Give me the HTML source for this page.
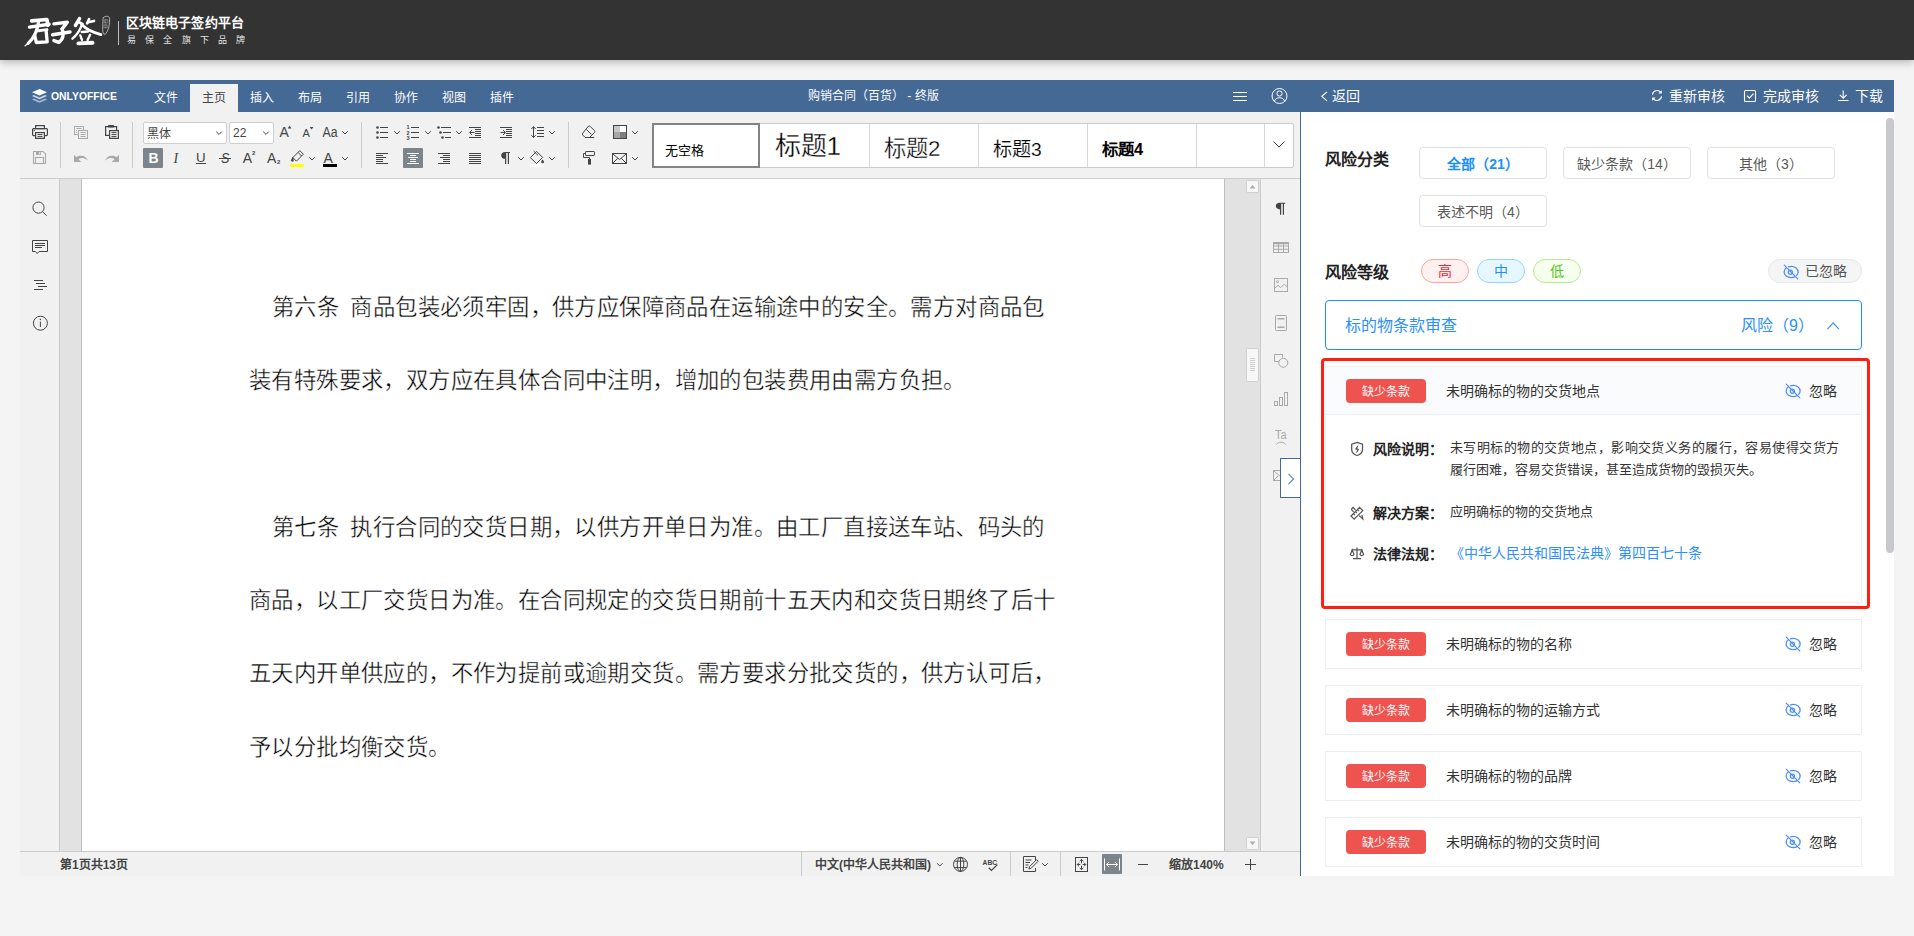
<!DOCTYPE html>
<html lang="zh-CN">
<head>
<meta charset="utf-8">
<title>合同审核</title>
<style>
*{box-sizing:border-box;margin:0;padding:0}
html,body{width:1914px;height:936px;overflow:hidden;background:#f4f4f4;font-family:"Liberation Sans",sans-serif;color:#444}
.abs{position:absolute}
svg{position:absolute;overflow:visible}
/* ---------- top header ---------- */
#hdr{position:absolute;left:0;top:0;width:1914px;height:60px;background:#333;box-shadow:0 2px 8px rgba(0,0,0,.28);z-index:5}
#logo{position:absolute;left:22px;top:11px;width:84px;height:40px;color:#fff;font-family:"Liberation Serif",serif;font-weight:700;font-style:italic;font-size:30px;line-height:40px;letter-spacing:-4.500px;white-space:nowrap}
#seal{position:absolute;left:103px;top:14px;width:9px;height:21px;border:1px solid #c4c4c4;border-radius:4px;transform:rotate(9deg);background:linear-gradient(180deg,#333 0 3px,#9a9a9a 3px 4px,#333 4px 6px,#9a9a9a 6px 7px,#333 7px 10px,#9a9a9a 10px 11px,#333 11px 13px,#9a9a9a 13px 14px,#333 14px)}
#hdiv{position:absolute;left:118px;top:21px;width:1px;height:24px;background:#bdbdbd}
#slog1{position:absolute;left:126px;top:13px;height:20px;line-height:20px;font-size:13px;font-weight:700;color:#fff;white-space:nowrap;letter-spacing:.1px}
#slog2{position:absolute;left:127px;top:33px;height:14px;line-height:14px;font-size:9px;color:#e6e6e6;white-space:nowrap;letter-spacing:9.2px}
/* ---------- editor ---------- */
#ed{position:absolute;left:20px;top:80px;width:1280px;height:796px;background:#f1f1f1}
#edbar{position:absolute;left:0;top:0;width:1280px;height:32px;background:#446995}
.tab{position:absolute;top:4px;width:48px;height:28px;line-height:28px;text-align:center;font-size:12px;color:#fff;white-space:nowrap}
.tab.on{background:#f1f1f1;color:#444}
#tb{position:absolute;left:0;top:32px;width:1280px;height:67px;background:#f1f1f1;border-bottom:1px solid #cbcbcb}
.vsep{position:absolute;width:1px;background:#cbcbcb}
.cmb{position:absolute;height:22px;background:#fff;border:1px solid #cfcfcf;border-radius:2px;font-size:12px;line-height:20px;color:#444;padding-left:3px;white-space:nowrap}
.btnon{position:absolute;width:20px;height:20px;background:#7d858c;border-radius:1px}
#lside{position:absolute;left:0;top:99px;width:40px;height:672px;background:#f1f1f1;border-right:1px solid #cbcbcb}
#docbg{position:absolute;left:40px;top:99px;width:1200px;height:672px;background:#e2e2e2}
#page{position:absolute;left:21px;top:0;width:1144px;height:672px;background:#fff;border-left:1px solid #bbbec2;border-right:1px solid #bbbec2}
.ln{position:absolute;height:30px;line-height:30px;font-size:22.4px;letter-spacing:.4px;color:#000;white-space:nowrap;font-weight:400;-webkit-text-stroke:.4px #fff}
.sp{display:inline-block;width:11.2px}
#rside{position:absolute;left:1240px;top:99px;width:40px;height:672px;background:#f1f1f1;border-left:1px solid #cbcbcb}
#sb{position:absolute;left:0;top:771px;width:1280px;height:25px;background:#f1f1f1;border-top:1px solid #cbcbcb;font-size:12px;font-weight:700;color:#444}
.sbt{position:absolute;top:0;height:24px;line-height:26px;white-space:nowrap}
#gal{position:absolute;left:632px;top:11px;width:642px;height:45px;background:#fff;border:1px solid #cbcbcb;border-radius:2px}
.st{position:absolute;top:0;height:43px;border-right:1px solid #d8d8d8;overflow:hidden}
.st span{position:absolute;white-space:nowrap;color:#000;line-height:34px;height:34px;font-weight:400;-webkit-text-stroke:.300px #fff}
.st.sel{top:-1px;left:-1px !important;height:45px;border:2px solid #848484}
/* ---------- review panel ---------- */
#pn{position:absolute;left:1300px;top:80px;width:594px;height:796px;background:#fff;border-left:1px solid #446995;overflow:hidden}
#pnbar{position:absolute;left:0;top:0;width:594px;height:32px;background:#446995;color:#fff;font-size:14px}
.pbt{position:absolute;top:0;height:32px;line-height:32px;white-space:nowrap;color:#fff;font-size:14px}
.h16{position:absolute;font-size:16px;font-weight:700;color:#222;height:24px;line-height:24px;white-space:nowrap}
.cat{position:absolute;width:128px;height:32px;border:1px solid #dcdfe6;border-radius:4px;background:#fff;text-align:center;line-height:32px;font-size:14px;color:#595959;white-space:nowrap}
.pill{position:absolute;top:179px;width:48px;height:24px;border-radius:12px;border:1px solid;text-align:center;line-height:22px;font-size:14px}
.card{position:absolute;left:24px;width:537px;height:50px;border:1px solid #ebeef5;background:#fff}
.tag{position:absolute;left:20px;top:12px;width:80px;height:24px;border-radius:4px;background:#ef5350;color:#fff;font-size:12px;line-height:26px;text-align:center;white-space:nowrap}
.ttl{position:absolute;left:120px;top:12px;height:24px;line-height:25px;font-size:14px;color:#333;white-space:nowrap}
.ign{position:absolute;left:483px;top:12px;height:24px;line-height:25px;font-size:14px;color:#333;white-space:nowrap}
.lbl{position:absolute;left:47px;height:22px;line-height:22px;font-size:14px;font-weight:700;color:#222;white-space:nowrap}
.val{position:absolute;left:124px;height:22px;line-height:22px;font-size:13px;color:#333;white-space:nowrap}
</style>
</head>
<body>
<!-- ======= top header ======= -->
<div id="hdr">
  <svg id="logosvg" style="left:20px;top:8px" width="104" height="44" viewBox="0 0 1914 810" fill="none" stroke="#fff" stroke-linecap="round" stroke-linejoin="round">
  <!-- 君 -->
  <path d="M215 238 L495 212 L512 318" stroke-width="67"/>
  <path d="M175 352 L535 300" stroke-width="64"/>
  <path d="M300 425 L495 398" stroke-width="55"/>
  <path d="M345 235 C325 400 250 560 150 650" stroke-width="58"/>
  <path d="M150 650 L95 695" stroke-width="26"/>
  <path d="M268 490 L300 635 L500 625 L482 430" stroke-width="61"/>
  <!-- 子 -->
  <path d="M625 292 L870 262 L775 385" stroke-width="64"/>
  <path d="M775 385 C810 470 800 570 715 632 L625 600" stroke-width="64"/>
  <path d="M600 492 L920 442" stroke-width="64"/>
  <!-- 签 -->
  <path d="M1095 195 L1020 322" stroke-width="64"/>
  <path d="M1085 262 L1150 292" stroke-width="49"/>
  <path d="M1272 205 L1235 282" stroke-width="49"/>
  <path d="M1255 262 L1362 238" stroke-width="49"/>
  <path d="M1140 305 C1100 420 1040 500 965 565" stroke-width="44"/>
  <path d="M1135 305 C1230 400 1350 455 1490 490" stroke-width="52"/>
  <path d="M1135 442 L1255 432" stroke-width="44"/>
  <path d="M1110 505 L1140 588" stroke-width="44"/>
  <path d="M1290 492 L1245 590" stroke-width="44"/>
  <path d="M1075 652 L1335 640" stroke-width="72"/>
  <!-- seal -->
  <path d="M1535 175 C1580 140 1640 145 1650 190 C1655 300 1630 420 1570 485 C1535 490 1520 450 1522 400 Z" stroke="#c9c9c9" stroke-width="15"/>
  <path d="M1560 215 h55 v60 h-55 z M1555 310 h50 v55 h-50 z M1575 215 v60 M1580 310 v55" stroke="#adadad" stroke-width="10"/>
</svg>

  <div id="hdiv"></div>
  <div id="slog1">区块链电子签约平台</div>
  <div id="slog2">易保全旗下品牌</div>
</div>

<!-- ======= editor ======= -->
<div id="ed">
  <div id="edbar">
    <svg id="edsvg" style="left:0;top:0;z-index:3" width="1280" height="796" viewBox="20 80 1280 796" fill="none" stroke="none">
<defs>
<path id="chev" d="M-2.8 -1.4 L0 1.4 L2.8 -1.4" stroke="#444" stroke-width="1" fill="none"/>
</defs>
<rect x="403" y="148" width="20" height="20" rx="1" fill="#7d858c"/>
<rect x="143" y="148" width="20" height="20" rx="1" fill="#7d858c"/>
<!-- ONLYOFFICE logo -->
<g fill="#fff">
<path d="M39.5 89 L47 92.3 L39.5 95.6 L32 92.3 Z"/>
<path d="M33.8 95.1 L32 95.9 L39.5 99.2 L47 95.9 L45.2 95.1 L39.5 97.6 Z" opacity=".75"/>
<path d="M33.8 98.6 L32 99.4 L39.5 102.7 L47 99.4 L45.2 98.6 L39.5 101.1 Z" opacity=".55"/>
</g>
<text x="51" y="100.3" font-family="Liberation Sans,sans-serif" font-weight="700" font-size="11px" fill="#fff" textLength="66" lengthAdjust="spacingAndGlyphs">ONLYOFFICE</text>
<!-- title bar right icons -->
<g stroke="#fff" stroke-width="1" shape-rendering="crispEdges"><path d="M1233 92.5h14M1233 96.5h14M1233 100.5h14"/></g>
<g stroke="#fff" stroke-width="1"><circle cx="1279.5" cy="96" r="7.5"/><circle cx="1279.5" cy="93.5" r="2.6"/><path d="M1274.2 101.3c1.2-2.6 3-3.6 5.3-3.6s4.1 1 5.3 3.6"/></g>

<!-- ===== toolbar row 1/2, group 1 ===== -->
<!-- print -->
<g stroke="#444" stroke-width="1.2" fill="none">
<rect x="35.6" y="125.6" width="8.8" height="3"/>
<rect x="32.6" y="128.6" width="14.8" height="7" rx="1"/>
<rect x="35.6" y="132.6" width="8.8" height="5.8" fill="#f1f1f1"/>
<path d="M37.5 134.6h5M37.5 136.6h5" stroke-width="1"/>
</g>
<rect x="33.8" y="129.8" width="1.2" height="1.2" fill="#444"/>
<!-- save (disabled) -->
<g stroke="#a9a9a9" stroke-width="1.1" fill="none">
<path d="M33.5 151.5h9.6l2.4 2.4v9.6h-12z"/>
<rect x="35.5" y="157.5" width="8" height="6"/>
</g>
<rect x="36" y="152" width="5" height="3" fill="#a9a9a9"/><rect x="39" y="152.3" width="1.2" height="2" fill="#f1f1f1"/>
<!-- copy (disabled) -->
<g stroke="#a9a9a9" stroke-width="1" fill="#f1f1f1">
<rect x="74.5" y="126.5" width="9" height="8"/>
<path d="M76.5 128.5h5M76 130.5h1M76 132.5h1" fill="none"/>
<rect x="78.5" y="130.5" width="9" height="8"/>
<path d="M80.5 132.5h5M80.5 134.5h5M80.5 136.5h5" fill="none"/>
</g>
<!-- paste -->
<g stroke="#444" stroke-width="1.2" fill="none">
<path d="M109.5 135.4h-3.9v-8.8h11v4"/>
<rect x="109.6" y="130.6" width="8.8" height="7.8" fill="#f1f1f1"/>
<path d="M111.5 132.6h5M111.5 134.6h5M111.5 136.6h5" stroke-width="1"/>
</g>
<rect x="108" y="125" width="6" height="2.4" rx=".6" fill="#444"/>
<!-- undo / redo (disabled) -->
<path d="M74 154.8v7.2h7.2l-2.7-2.7c2.6-1.9 6.2-1.6 9.6 1.4c-1.8-4.6-7.4-6.6-11.7-3.5z" fill="#a9a9a9"/>
<path d="M119 154.8v7.2h-7.2l2.7-2.7c-2.6-1.9-6.2-1.6-9.6 1.4c1.8-4.6 7.4-6.6 11.7-3.5z" fill="#a9a9a9"/>

<!-- ===== font size controls ===== -->
<g font-family="Liberation Sans,sans-serif" fill="#444">
<text x="279.4" y="136.8" font-size="14px">A</text>
<path d="M287.8 128.4l1.8-2.8l1.8 2.8z"/>
<text x="302.6" y="136.8" font-size="11px">A</text>
<path d="M309.8 127l1.8 2.5l1.8-2.5z"/>
<text x="322.6" y="136.8" font-size="14px" textLength="15" lengthAdjust="spacingAndGlyphs">Aa</text>
<use href="#chev" x="345" y="132.6"/>
<!-- row 2 -->
<text x="148.6" y="163" font-size="14px" font-weight="700" fill="#fff">B</text>
<text x="173.6" y="163" font-size="14px" font-family="Liberation Serif,serif" font-style="italic">I</text>
<text x="196" y="162.4" font-size="13px" textLength="9.6" lengthAdjust="spacingAndGlyphs">U</text>
<rect x="196" y="163" width="10" height="1"/>
<text x="221" y="163" font-size="14px" font-style="italic" textLength="8.4" lengthAdjust="spacingAndGlyphs">S</text>
<rect x="219" y="158" width="12" height="1"/>
<text x="242.8" y="163" font-size="14px">A</text>
<text x="252" y="155" font-size="6px" font-weight="700">2</text>
<text x="267" y="163" font-size="14px">A</text>
<text x="277" y="164.2" font-size="6px" font-weight="700">2</text>
<text x="323.6" y="162.8" font-size="14px">A</text>
</g>
<!-- highlight pen -->
<g stroke="#444" stroke-width="1" fill="none">
<path d="M299.8 150.6l3.6 3.6l-7 7l-3.6-3.6z"/>
<path d="M298 152.4l3.6 3.6"/>
<path d="M292.8 157.6l-1.6 3.2l2 .4z" fill="#444"/>
</g>
<rect x="290" y="164" width="14" height="3" fill="#ffff00"/>
<use href="#chev" x="312" y="158.6"/>
<rect x="323" y="164" width="14" height="3" fill="#000"/>
<use href="#chev" x="345" y="158.6"/>

<!-- ===== paragraph group ===== -->
<g fill="#444">
<circle cx="377.5" cy="127.5" r="1.3"/><circle cx="377.5" cy="132.5" r="1.3"/><circle cx="377.5" cy="137.5" r="1.3"/>
<circle cx="438.5" cy="127.5" r="1.3"/><circle cx="440.5" cy="132.5" r="1.3"/><circle cx="442.5" cy="137.5" r="1.3"/>
</g>
<g stroke="#444" stroke-width="1" shape-rendering="crispEdges">
<path d="M380 127.5h8M380 132.5h8M380 137.5h8"/>
<path d="M411 127.5h8M411 132.5h8M411 137.5h8"/>
<path d="M441 127.5h10M443 132.5h8M445 137.5h6"/>
<!-- dec indent -->
<path d="M469 127.5h12M475 129.5h6M475 131.5h6M475 133.5h6M475 135.5h6M469 137.5h12"/>
<!-- inc indent -->
<path d="M500 127.5h12M506 129.5h6M506 131.5h6M506 133.5h6M506 135.5h6M500 137.5h12"/>
<!-- line spacing -->
<path d="M537 127.5h7M537 130.5h7M537 133.5h7M537 136.5h7"/>
<!-- align left -->
<path d="M376 153.5h12M376 155.5h7M376 157.5h10M376 159.5h7M376 161.5h7M376 163.5h12"/>
<!-- align right -->
<path d="M438 153.5h12M443 155.5h7M440 157.5h10M443 159.5h7M443 161.5h7M438 163.5h12"/>
<!-- justify -->
<path d="M469 153.5h12M469 155.5h12M469 157.5h12M469 159.5h12M469 161.5h12M469 163.5h12"/>
</g>
<g stroke="#fff" stroke-width="1" shape-rendering="crispEdges">
<path d="M407 153.5h12M410 155.5h6M408 157.5h10M410 159.5h6M410 161.5h6M407 163.5h12"/>
</g>
<!-- numbering digits -->
<g font-family="Liberation Sans,sans-serif" font-weight="700" font-size="5.5px" fill="#444">
<text x="406.6" y="129.4">1</text><text x="406.6" y="134.6">2</text><text x="406.6" y="139.6">3</text>
</g>
<g stroke="#444" stroke-width="1" fill="none">
<path d="M474.5 132.5h-4.5M472 130l-2.5 2.5l2.5 2.5"/>
<path d="M500.5 132.5h4.5M503 130l2.500 2.5l-2.5 2.5"/>
<path d="M533.5 126.8v10.6M531.3 129l2.2-2.4l2.2 2.4M531.3 135.200l2.200 2.400l2.200-2.400"/>
</g>
<use href="#chev" x="397" y="132.600"/><use href="#chev" x="428" y="132.600"/><use href="#chev" x="459" y="132.600"/><use href="#chev" x="552" y="132.600"/>
<!-- pilcrow -->
<path d="M505.200 152h4.800v1h-1v11h-1.200v-11h-1.600v11h-1.200v-5.200c-2.400 0-3.800-1.400-3.800-3.400s1.400-3.400 4-3.400z" fill="#444"/>
<use href="#chev" x="521" y="158.600"/>
<!-- bucket -->
<g stroke="#444" stroke-width="1" fill="none">
<path d="M536.600 151.400l6 6l-6.200 6.200l-6-6z"/>
<path d="M533.600 151l4.400 4.400"/>
</g>
<path d="M542.600 159.400c.8 1 1.400 1.800 1.400 2.500a1.400 1.400 0 0 1-2.800 0c0-.7.600-1.500 1.400-2.500z" fill="#444"/>
<rect x="530" y="164" width="14" height="3" fill="#fff"/>
<use href="#chev" x="552" y="158.600"/>

<!-- ===== group 4 ===== -->
<g stroke="#444" stroke-width="1" fill="none">
<!-- eraser -->
<path d="M590.200 126.400l4.200 4.200a1.400 1.400 0 0 1 0 2l-4.900 4.900h-4.300l-2.400-2.400a1.400 1.400 0 0 1 0-2l5.400-6.700a1.400 1.400 0 0 1 2 0z"/>
<path d="M586.400 129.400l5 5M585 137.500h9.200"/>
<!-- roller -->
<rect x="585.500" y="151.500" width="9" height="4" rx=".6"/>
<path d="M585.500 153.500h-2v4h6v2"/>
<!-- mail -->
<rect x="612.500" y="153.500" width="14" height="10"/>
<path d="M612.800 153.800l6.700 5.800l6.700-5.800M612.800 163.200l5-5M626.200 163.200l-5-5"/>
</g>
<rect x="588" y="159" width="3" height="5.600" fill="#444"/>
<!-- color scheme -->
<rect x="614" y="126" width="6" height="6" fill="#c8c8c8"/><rect x="620" y="126" width="6" height="6" fill="#fff"/>
<rect x="614" y="132" width="6" height="6" fill="#a6a6a6"/><rect x="620" y="132" width="6" height="6" fill="#7f7f7f"/>
<rect x="613.500" y="125.500" width="13" height="13" stroke="#444" stroke-width="1" fill="none"/>
<use href="#chev" x="635" y="132.600"/><use href="#chev" x="635" y="158.600"/>
<!-- combobox chevrons -->
<use href="#chev" x="219" y="133"/><use href="#chev" x="266" y="133"/>
<!-- style gallery chevron -->
<path d="M1273.500 141.500l5.500 5.500l5.500-5.500" stroke="#444" stroke-width="1" fill="none"/>
<!-- ===== left sidebar ===== -->
<g stroke="#444" stroke-width="1" fill="none">
<circle cx="38.500" cy="207.600" r="5.600"/><path d="M42.600 211.700l4 4"/>
<path d="M32.500 240.500h15v11h-8.500l-1.800 2l-1.800-2h-2.900z"/>
<path d="M35 243.500h10M35 245.500h10M35 247.500h6.500" shape-rendering="crispEdges"/>
<path d="M34 280.500h9M36 283.500h9M38 286.500h9M34 289.500h9" shape-rendering="crispEdges"/>
<circle cx="40.400" cy="323.200" r="7"/>
<path d="M40.400 321.600v5.400" />
</g>
<circle cx="40.400" cy="319.500" r=".8" fill="#444"/>
<!-- ===== right sidebar ===== -->
<path d="M1279.600 202.800h5.600v1h-1.200v11h-1.200v-11h-1.600v11h-1.200v-5.400c-2.600 0-4.200-1.400-4.200-3.300s1.400-3.300 3.800-3.300z" fill="#444"/>
<g stroke="#a9a9a9" stroke-width="1" fill="none">
<rect x="1273.500" y="242.500" width="15" height="10"/>
<path d="M1273.500 243.500h15" stroke-width="1.400"/>
<path d="M1273.500 246h15M1273.500 249.300h15M1278.500 243v9.500M1283.500 243v9.500"/>
<rect x="1274.500" y="278.500" width="13" height="13"/>
<circle cx="1277.500" cy="281.700" r="1"/>
<path d="M1274.800 288.200l3.200-2.800l2.800 2.200l3.400-3.400l3.200 2.800"/>
<rect x="1275.500" y="315.500" width="11" height="15" rx=".8"/>
<path d="M1277.500 318.700h7M1277.500 327.300h7" stroke-width="1.500"/>
<path d="M1279 361.500h-4.500v-7h8v3"/>
<circle cx="1283.300" cy="362.800" r="4.500"/>
<rect x="1274.500" y="401.500" width="3" height="4"/><rect x="1279.500" y="397.500" width="3" height="8"/><rect x="1284.500" y="392.500" width="3" height="13"/>
<path d="M1276.200 444.600c2.600-3.200 7-3.200 9.600 0"/>
<rect x="1273.500" y="470.500" width="12" height="10"/><path d="M1273.800 470.800l6 5.200M1273.800 480.200l4.600-4.600"/>
</g>
<text x="1275" y="439" font-family="Liberation Sans,sans-serif" font-size="12.500px" fill="#a9a9a9" textLength="11.500" lengthAdjust="spacingAndGlyphs">Ta</text>
<!-- collapse toggle -->
<rect x="1280.500" y="458.500" width="20" height="39" fill="#fff" stroke="#446995" stroke-width="1"/>
<path d="M1288.500 473.800l5 5.200l-5 5.200" stroke="#5a82bd" stroke-width="1.100" fill="none"/>
<!-- ===== vertical scrollbar ===== -->
<g stroke="#cfcfcf" stroke-width="1" fill="#f7f7f7">
<rect x="1246.500" y="180.500" width="12" height="12" rx="1"/>
<rect x="1246.500" y="348.500" width="12" height="33" rx="1"/>
<rect x="1246.500" y="837.500" width="12" height="12" rx="1"/>
</g>
<path d="M1249.500 188.500l3-3.500l3 3.500z" fill="#adadad"/>
<path d="M1249.500 841.500l3 3.500l3-3.500z" fill="#adadad"/>
<path d="M1250 358.500h5M1250 360.500h5M1250 362.500h5M1250 364.500h5M1250 366.500h5M1250 368.500h5M1250 370.500h5" stroke="#cfcfcf" stroke-width="1" shape-rendering="crispEdges"/>
<!-- ===== status bar ===== -->
<g stroke="#cbcbcb" stroke-width="1" shape-rendering="crispEdges"><path d="M801.500 852v24M1010.500 852v24M1060.500 852v24"/></g>
<rect x="1102" y="854" width="20" height="20" rx="1" fill="#7d858c"/>
<use href="#chev" x="939.800" y="864.600"/>
<use href="#chev" x="1045" y="864.600"/>
<g stroke="#444" stroke-width="1" fill="none">
<circle cx="960.500" cy="864.400" r="7"/>
<ellipse cx="960.500" cy="864.400" rx="3.300" ry="7"/>
<path d="M960.500 857.400v14M954.400 861.200h12.200M954.400 867.600h12.200"/>
<path d="M988.800 867.800l2.600 2.600l6-5.800" stroke-width="1.300"/>
<path d="M1035.500 861v-4.500h-12v15h12v-3.500"/>
<path d="M1025.500 860h6M1025.500 862.500h4.500M1025.500 865h3M1025.500 867.500h2" />
<path d="M1036.600 859.600l1.600 1.600l-7 7l-2.400.8l.8-2.400z"/>
<rect x="1075.500" y="857.500" width="12" height="14"/>
<path d="M1081.500 859.300v4M1081.500 865.700v4M1077.300 864.500h3M1082.700 864.500h3M1079.700 861.200l1.800-1.900l1.800 1.900M1079.700 867.800l1.800 1.900l1.800-1.900M1079 862.700l-1.800 1.800l1.800 1.800M1084 862.700l1.800 1.800l-1.800 1.800"/>
<path d="M1138 864.500h10M1245 864.500h11M1250.500 859v11" shape-rendering="crispEdges"/>
</g>
<g stroke="#fff" stroke-width="1" fill="none">
<path d="M1104.500 858.500v12M1119.500 858.500v12M1106.500 864.500h11M1108.800 862.200l-2.300 2.300l2.300 2.300M1115.200 862.200l2.300 2.300l-2.300 2.300"/>
</g>
<text x="982.600" y="865" font-family="Liberation Sans,sans-serif" font-size="7.500px" font-weight="700" fill="#444" textLength="14.500" lengthAdjust="spacingAndGlyphs">ABC</text>

</svg>

    <div class="tab" style="left:122px">文件</div>
    <div class="tab on" style="left:170px">主页</div>
    <div class="tab" style="left:218px">插入</div>
    <div class="tab" style="left:266px">布局</div>
    <div class="tab" style="left:314px">引用</div>
    <div class="tab" style="left:362px">协作</div>
    <div class="tab" style="left:410px">视图</div>
    <div class="tab" style="left:458px">插件</div>
    <div class="abs" style="left:788px;top:6px;height:20px;line-height:20px;font-size:12px;color:#fff;white-space:nowrap">购销合同（百货） - 终版</div>
    
  </div>
  <div id="tb">
    <div class="vsep" style="left:40px;top:10px;height:46px"></div>
    <div class="vsep" style="left:112px;top:10px;height:46px"></div>
    <div class="vsep" style="left:341px;top:10px;height:46px"></div>
    <div class="vsep" style="left:548px;top:10px;height:46px"></div>
    <div class="cmb" style="left:123px;top:10px;width:84px;padding-top:1px">黑体</div>
    <div class="cmb" style="left:209px;top:10px;width:45px">22</div>
    <div id="gal">
      <div class="st sel" style="left:0;width:108px"><span style="left:11px;top:9px;font-size:13px;-webkit-text-stroke:0">无空格</span></div>
      <div class="st" style="left:108px;width:109px"><span style="left:13.500px;top:5px;font-size:26px">标题1</span></div>
      <div class="st" style="left:217px;width:109px"><span style="left:14px;top:7.500px;font-size:22.300px">标题2</span></div>
      <div class="st" style="left:326px;width:109px"><span style="left:14px;top:9px;font-size:19.200px;-webkit-text-stroke:.150px #fff">标题3</span></div>
      <div class="st" style="left:435px;width:109px"><span style="left:14px;top:8px;font-size:16.400px;font-weight:700;-webkit-text-stroke:0">标题4</span></div>
      <div class="st" style="left:544px;width:68px"></div>
      <div class="st" style="left:612px;width:29px;border-right:0"></div>
    </div>

  </div>
  <div id="lside"></div>
  <div id="docbg">
    <div id="page">
      <div class="ln" style="left:190.0px;top:114px">第六条<span class="sp"></span>商品包装必须牢固，供方应保障商品在运输途中的安全。需方对商品包</div>
      <div class="ln" style="left:167.0px;top:187px">装有特殊要求，双方应在具体合同中注明，增加的包装费用由需方负担。</div>
      <div class="ln" style="left:190.0px;top:334px">第七条<span class="sp"></span>执行合同的交货日期，以供方开单日为准。由工厂直接送车站、码头的</div>
      <div class="ln" style="left:167.0px;top:407px">商品，以工厂交货日为准。在合同规定的交货日期前十五天内和交货日期终了后十</div>
      <div class="ln" style="left:167.0px;top:480px">五天内开单供应的，不作为提前或逾期交货。需方要求分批交货的，供方认可后，</div>
      <div class="ln" style="left:167.0px;top:554px">予以分批均衡交货。</div>
    </div>
    
  </div>
  <div id="rside"></div>
  <div id="sb"><div class="sbt" style="left:40px">第1页共13页</div>
    <div class="sbt" style="left:795px">中文(中华人民共和国)</div>
    <div class="sbt" style="left:1149px">缩放140%</div></div>
</div>

<!-- ======= review panel ======= -->
<div id="pn">
  <div id="pnbar"><div class="pbt" style="left:31px">返回</div>
    <div class="pbt" style="left:368px">重新审核</div>
    <div class="pbt" style="left:462px">完成审核</div>
    <div class="pbt" style="left:554px">下载</div></div>
  <div class="h16" style="left:24px;top:68px">风险分类</div>
  <div class="cat" style="left:118px;top:67px;color:#1890ff;font-weight:700">全部（21）</div>
  <div class="cat" style="left:262px;top:67px">缺少条款（14）</div>
  <div class="cat" style="left:406px;top:67px">其他（3）</div>
  <div class="cat" style="left:118px;top:115px">表述不明（4）</div>
  <div class="h16" style="left:24px;top:181px">风险等级</div>
  <div class="pill" style="left:120px;background:#fff1f0;border-color:#ffa39e;color:#f5222d">高</div>
  <div class="pill" style="left:176px;background:#e6f7ff;border-color:#91d5ff;color:#1890ff">中</div>
  <div class="pill" style="left:232px;background:#f6ffed;border-color:#b7eb8f;color:#52c41a">低</div>
  <div class="abs" style="left:467px;top:179px;width:94px;height:24px;border-radius:12px;border:1px solid #e4e7ed;background:#f4f5f5"></div>
  <div class="abs" style="left:504px;top:179px;height:24px;line-height:24px;font-size:14px;color:#555;white-space:nowrap">已忽略</div>
  <div class="abs" style="left:24px;top:220px;width:537px;height:50px;border:1px solid #1890ff;border-radius:4px;background:#fff"></div>
  <div class="abs" style="left:44px;top:234px;height:24px;line-height:24px;font-size:16px;color:#2b8fff;white-space:nowrap">标的物条款审查</div>
  <div class="abs" style="left:440px;top:234px;height:24px;line-height:24px;font-size:16px;color:#2b8fff;white-space:nowrap">风险（9）</div>
  <!-- expanded card -->
  <div class="card" style="top:286px;height:237px">
    <div class="abs" style="left:0;top:0;width:535px;height:48px;background:#fafbfc;border-bottom:1px solid #ebeef5"></div>
    <div class="tag">缺少条款</div><div class="ttl">未明确标的物的交货地点</div><div class="ign">忽略</div>
    <div class="lbl" style="top:71px">风险说明：</div>
    <div class="val" style="top:69.600px;width:389px;height:46px;line-height:22.800px;white-space:normal"><span style="display:block;text-align:justify;text-align-last:justify;white-space:nowrap">未写明标的物的交货地点，影响交货义务的履行，容易使得交货方</span><span style="display:block;white-space:nowrap">履行困难，容易交货错误，甚至造成货物的毁损灭失。</span></div>
    <div class="lbl" style="top:135.400px">解决方案：</div>
    <div class="val" style="top:134px">应明确标的物的交货地点</div>
    <div class="lbl" style="top:176px">法律法规：</div>
    <div class="val" style="top:175px;color:#2b8fff;font-size:14px">《中华人民共和国民法典》第四百七十条</div>
  </div>
  <div class="abs" style="left:20px;top:278px;width:549px;height:251px;border:3px solid #ff1e10;border-radius:4px"></div>
  <div class="card" style="top:539px"><div class="tag">缺少条款</div><div class="ttl">未明确标的物的名称</div><div class="ign">忽略</div></div>
  <div class="card" style="top:605px"><div class="tag">缺少条款</div><div class="ttl">未明确标的物的运输方式</div><div class="ign">忽略</div></div>
  <div class="card" style="top:671px"><div class="tag">缺少条款</div><div class="ttl">未明确标的物的品牌</div><div class="ign">忽略</div></div>
  <div class="card" style="top:737px"><div class="tag">缺少条款</div><div class="ttl">未明确标的物的交货时间</div><div class="ign">忽略</div></div>
  <div class="abs" style="left:585px;top:38px;width:8px;height:435px;border-radius:4px;background:#c8c9cc"></div>
  <svg style="left:0;top:0" width="593" height="796" viewBox="1301 80 593 796" fill="none">
  <defs>
  <g id="eye" stroke="#4a8dff" stroke-width="1.300" fill="none" stroke-linecap="round">
    <path d="M-4.600 -4.300c-1.500 1-2.300 2.600-2.300 4.300c0 3.200 3.100 5.600 7 5.600c1.500 0 2.900-.4 4-1"/>
    <path d="M-2.500 -5.200c.8-.3 1.700-.4 2.600-.4c3.900 0 7 2.400 7 5.600c0 1.300-.5 2.500-1.400 3.400"/>
    <circle cx="-.6" cy=".3" r="2.100"/>
    <path d="M-6.800 -6.800l13.600 13.600" stroke-width="1.200"/>
  </g>
  </defs>
  <!-- bar icons -->
  <g stroke="#fff" stroke-width="1.100" fill="none">
  <path d="M1327 91.800l-5.200 4.500l5.200 4.500"/>
  <path d="M1652.400 94.600a4.700 4.700 0 0 1 8.400-2.200"/><path d="M1661.600 96.400a4.700 4.700 0 0 1-8.400 2.200"/>
  <rect x="1744.500" y="90.500" width="11" height="11" rx="1"/>
  <path d="M1747 95.600l2.400 2.600l4-4.600"/>
  <path d="M1843.200 90.600v7.400M1839.800 94.800l3.400 3.400l3.400-3.400M1838 100.500h10.500"/>
  </g>
  <path d="M1661.800 90.200v3.400h-3.400z" fill="#fff"/><path d="M1652.200 100.800v-3.400h3.400z" fill="#fff"/>
  <!-- ignored pill eye + row eyes -->
  <use href="#eye" x="1791" y="272"/>
  <use href="#eye" x="1793" y="391"/>
  <use href="#eye" x="1793" y="644"/>
  <use href="#eye" x="1793" y="710"/>
  <use href="#eye" x="1793" y="776"/>
  <use href="#eye" x="1793" y="842"/>
  <!-- chevron up -->
  <path d="M1827.500 329.200l5.700-6.400l5.700 6.400" stroke="#2b8fff" stroke-width="1.100"/>
  <!-- detail icons -->
  <g stroke="#555" stroke-width="1.250" fill="none">
  <path d="M1357.100 442.300l5.400 1.800v5.400c0 3-2.400 4.900-5.400 6c-3-1.100-5.400-3-5.400-6v-5.400z"/>
  <path d="M1358 445.600l-2.400 3.600h3l-2 3.400" stroke-width="1" fill="#595959"/>
  <!-- ruler / pencil -->
  <path d="M1359.600 507.400l3.200 3.200l-8.600 8.600l-3.200-3.200z"/>
  <path d="M1357.400 509.600l1.500 1.500M1355.400 511.600l1.500 1.500M1353.400 513.600l1.500 1.500"/>
  <path d="M1351.200 509.400l1.900-1.900l2.400 2.400M1351.200 509.400l2.400 2.400"/>
  <path d="M1359.200 515.600l3.600 3.300l-.9-4.100"/>
  <!-- scales -->
  <path d="M1357 547.600v10.800M1353 558.600h8M1351.600 549.800h10.800"/>
  <path d="M1350.400 554.400l1.800-4.400l1.800 4.400a1.900 1.900 0 0 1-3.600 0zM1360 554.400l1.800-4.400l1.800 4.400a1.900 1.900 0 0 1-3.600 0z"/>
  </g>
  </svg>

</div>
</body>
</html>
